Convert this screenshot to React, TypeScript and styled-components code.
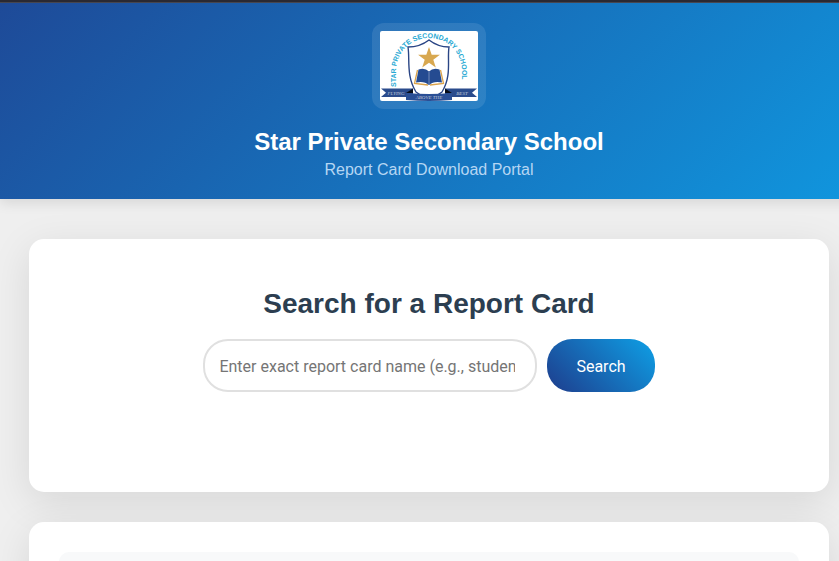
import React from "react";
import styled, { createGlobalStyle } from "styled-components";

const GlobalStyle = createGlobalStyle`
  * { box-sizing: border-box; }
  html, body { margin: 0; overflow-x: hidden; }
  body {
    background: #efefef;
    font-family: "Liberation Sans", Arial, sans-serif;
  }
`;

const Page = styled.div`
  width: calc(100% + 19px);
  min-height: 100vh;
  max-height: 100vh;
  overflow: hidden;
  background: #efefef;
`;

const TopEdge = styled.div`
  height: 3px;
  background: #2b2a33;
  border-bottom: 1px solid #484852;
`;

const Header = styled.header`
  display: flex;
  flex-direction: column;
  align-items: center;
  padding: 20px;
  background: linear-gradient(135deg, #1e4a98, #1096de);
  box-shadow: 0 4px 12px rgba(0, 0, 0, 0.1);
`;

const LogoFrame = styled.div`
  display: flex;
  padding: 8px;
  margin-bottom: 20px;
  border-radius: 12px;
  background: rgba(255, 255, 255, 0.1);
`;

const LogoImage = styled.svg`
  display: block;
  width: 98px;
  height: 70px;
  border-radius: 2px;
  background: #ffffff;
`;

const SchoolName = styled.h1`
  margin: 0 0 6px;
  font-size: 24px;
  line-height: 26px;
  color: #ffffff;
`;

const Tagline = styled.p`
  margin: 0;
  font-size: 16px;
  line-height: 18px;
  color: #b5d6f3;
`;

const Main = styled.main`
  display: flex;
  flex-direction: column;
  gap: 30px;
  width: 100%;
  max-width: 800px;
  margin: 40px auto;
`;

const Card = styled.section`
  padding: 30px;
  border-radius: 15px;
  background: #ffffff;
  box-shadow: 0 10px 40px rgba(0, 0, 0, 0.1);
`;

const SearchCard = styled(Card)`
  padding: 50px 30px 100px;
  text-align: center;
`;

const Heading = styled.h2`
  margin: 0 0 20px;
  font-size: 28px;
  line-height: 30px;
  color: #2c3e50;
`;

const SearchForm = styled.form`
  display: flex;
  justify-content: center;
  gap: 10px;
`;

const SearchInput = styled.input`
  width: 334px;
  height: 53px;
  padding: 16px 20px 14px 14px;
  border: 2px solid #e0e0e0;
  border-radius: 25px;
  background: #ffffff;
  font-family: Roboto, sans-serif;
  font-size: 16px;
  color: #333333;

  &::placeholder {
    color: #757575;
    opacity: 1;
  }
`;

const SearchButton = styled.button`
  padding: 16px 29px 14px;
  border: none;
  border-radius: 25px;
  background: linear-gradient(45deg, #1e3c8c, #0ea0e6);
  font-family: Roboto, sans-serif;
  font-size: 16px;
  color: #ffffff;
  cursor: pointer;
`;

const ReportPanel = styled.div`
  min-height: 120px;
  border-radius: 10px;
  background: #f8f9fa;
`;

function SchoolLogo() {
  return (
    <LogoImage viewBox="0 0 98 70" role="img" aria-label="Star Private Secondary School">
      <defs>
        <path id="nameArc" d="M16 56V40A33 33 0 0 1 82 40V60" />
      </defs>
      <text fill="#27a9d3" fontFamily="Liberation Sans, sans-serif" fontSize="7" fontWeight="700">
        <textPath href="#nameArc">STAR PRIVATE SECONDARY SCHOOL</textPath>
      </text>
      <path
        d="M28 16Q40 16 49 9Q58 16 69 16C67 28 72 45 62 61Q56 66 49 68Q42 66 36 61C26 45 30 28 28 16Z"
        fill="#fff"
        stroke="#2a4585"
        strokeWidth="1.400"
      />
      <path d="M49 16L51.700 23.800H59.900L53.300 28.700L55.800 36.600L49 31.800L42.200 36.600L44.700 28.700L38.100 23.800H46.300Z" fill="#d8a850" />
      <path d="M37.500 39L34.500 52.500L48 54M60.500 39L63.500 52.500L50 54" fill="none" stroke="#dba34b" strokeWidth="1.300" />
      <path
        d="M38.500 38.500Q45 36.500 49 40.500Q53 36.500 59.500 38.500L62 51.500Q54 49.500 49 54Q44 49.500 36 51.500Z"
        fill="#254b91"
      />
      <path d="M49 41V53" stroke="#a9b9d8" strokeWidth="0.600" />
      <path d="M1 57.500H33V66H1L6 61.800ZM97 57.500H65V66H97L92 61.800Z" fill="#2a4b8c" />
      <path d="M33 57.500L26 62H33ZM65 57.500L72 62H65Z" fill="#080d18" />
      <path d="M26 62Q49 64 72 62V69Q49 71 26 69Z" fill="#2a4f95" />
      <g fill="#c3cada" fontFamily="Liberation Serif, serif" fontSize="5" fontStyle="italic" textAnchor="middle">
        <text x="16" y="63.500">FLYING</text>
        <text x="49" y="68">ABOVE THE</text>
        <text x="82" y="63.500">BEST</text>
      </g>
    </LogoImage>
  );
}

export default function App() {
  return (
    <>
      <GlobalStyle />
      <Page>
        <TopEdge />
        <Header>
          <LogoFrame>
            <SchoolLogo />
          </LogoFrame>
          <SchoolName>Star Private Secondary School</SchoolName>
          <Tagline>Report Card Download Portal</Tagline>
        </Header>
        <Main>
          <SearchCard>
            <Heading>Search for a Report Card</Heading>
            <SearchForm onSubmit={(event) => event.preventDefault()}>
              <SearchInput
                type="text"
                aria-label="Report card name"
                placeholder="Enter exact report card name (e.g., student name)"
              />
              <SearchButton type="submit">Search</SearchButton>
            </SearchForm>
          </SearchCard>
          <Card>
            <ReportPanel />
          </Card>
        </Main>
      </Page>
    </>
  );
}
